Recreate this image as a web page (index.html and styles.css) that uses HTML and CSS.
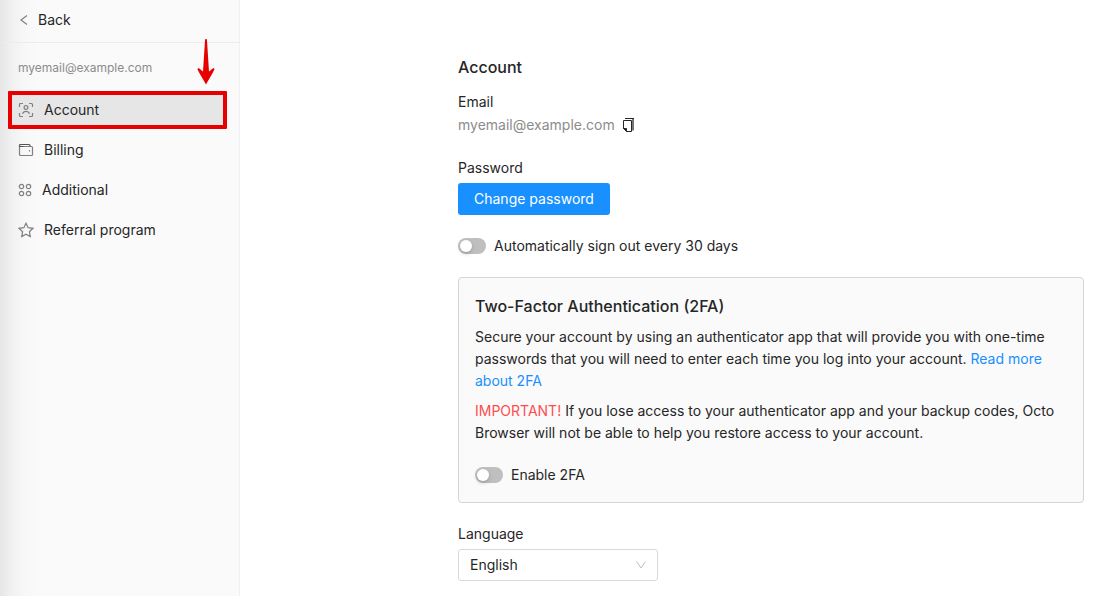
FILE: index.html
```html
<!DOCTYPE html>
<html lang="en">
<head>
<meta charset="utf-8">
<meta name="viewport" content="width=device-width, initial-scale=1">
<title>Account</title>
<link rel="stylesheet" href="styles.css">
</head>
<body>
<div class="layout">
  <aside class="sidebar">
    <a class="back" href="#">
      <svg class="back-icon" width="12" height="12" viewBox="0 0 12 12"><path d="M9 1.500 3 6 9 10.500"/></svg>
      <span>Back</span>
    </a>
    <p class="user">myemail@example.com</p>
    <nav class="menu">
      <a class="item item-active" href="#">
        <svg class="icon" width="16" height="16" viewBox="0 0 16 16"><path d="M1.500 5V2.500a1 1 0 0 1 1-1H5M11 1.500h2.500a1 1 0 0 1 1 1V5M14.500 11v2.500a1 1 0 0 1-1 1H11M5 14.500H2.500a1 1 0 0 1-1-1V11M4.500 11.800c.5-1.600 1.800-2.500 3.500-2.500s3 .9 3.500 2.500"/><circle cx="8" cy="5.500" r="1.900"/></svg>
        <span>Account</span>
      </a>
      <a class="item" href="#">
        <svg class="icon" width="16" height="16" viewBox="0 0 16 16"><path d="M1.500 4.500h12a1 1 0 0 1 1 1v7a1 1 0 0 1-1 1h-11a1 1 0 0 1-1-1z"/><path class="dark" d="M1.500 4.500v-1a1 1 0 0 1 1-1h8.500a1 1 0 0 1 1 1v1M1.500 4.500h4"/><path d="M11.500 8v1.500"/></svg>
        <span>Billing</span>
      </a>
      <a class="item" href="#">
        <svg class="icon icon-small" width="14" height="14" viewBox="0 0 14 14"><circle cx="3.500" cy="3.500" r="2.200"/><circle cx="10.500" cy="3.500" r="2.200"/><circle cx="3.500" cy="10.500" r="2.200"/><circle cx="10.500" cy="10.500" r="2.200"/></svg>
        <span>Additional</span>
      </a>
      <a class="item" href="#">
        <svg class="icon" width="16" height="16" viewBox="0 0 16 16"><path d="m8 1.200 2.100 4.500 4.900.6-3.600 3.400.9 4.900L8 12.200l-4.300 2.400.9-4.900L1 6.300l4.900-.6z"/></svg>
        <span>Referral program</span>
      </a>
    </nav>
    <svg class="arrow" width="18" height="46" viewBox="0 0 18 46"><path d="M9 0c.8 0 1 .6 1 1.500L12 32.500l4-3.200c.8-.5 1.800.2 1.400 1.200C15 36 12 39.500 9 45.500 6 39.500 3 36 .6 30.500c-.4-1 .6-1.700 1.400-1.200l4 3.200L8 1.500C8 .6 8.200 0 9 0z"/></svg>
  </aside>
  <main class="content">
    <h1 class="title">Account</h1>
    <section class="field">
      <div class="label">Email</div>
      <div class="email">
        <span>myemail@example.com</span>
        <button class="copy" type="button" aria-label="Copy email">
          <svg width="14" height="16" viewBox="0 0 14 16"><path class="copy-bar" d="M11 2v11.500"/><path class="copy-top" d="M3 1.500h9"/><path class="copy-page" d="M1.500 3.500h8v11H4.500L1.500 11.500z"/><path class="copy-fold" d="M1.500 11.500h3v3z"/></svg>
        </button>
      </div>
    </section>
    <section class="field">
      <div class="label label-gap">Password</div>
      <button class="primary" type="button">Change password</button>
    </section>
    <label class="toggle"><input class="switch" type="checkbox" role="switch"><span>Automatically sign out every 30 days</span></label>
    <section class="card">
      <h2 class="title">Two-Factor Authentication (2FA)</h2>
      <p class="text">Secure your account by using an authenticator app that will provide you with one-time passwords that you will need to enter each time you log into your account. <a class="link" href="#">Read more about 2FA</a></p>
      <p class="text"><span class="warning">IMPORTANT!</span> If you lose access to your authenticator app and your backup codes, Octo Browser will not be able to help you restore access to your account.</p>
      <label class="toggle"><input class="switch" type="checkbox" role="switch"><span>Enable 2FA</span></label>
    </section>
    <section class="language">
      <label class="label label-gap" for="language">Language</label>
      <div class="select-wrap">
        <select class="select" id="language"><option>English</option></select>
        <svg class="chevron" width="12" height="12" viewBox="0 0 12 12"><path d="M1.500 2.500 6 9l4.500-6.500"/></svg>
      </div>
    </section>
  </main>
</div>
</body>
</html>
```
FILE: styles.css
```css
* { box-sizing: border-box; }

body {
  margin: 0;
  background: #fff;
  color: #262626;
  font-family: Inter, "Liberation Sans", sans-serif;
  font-size: 14px;
  line-height: 22px;
}

h1, h2, p { margin: 0; }
a { color: inherit; text-decoration: none; }
button, select { font: inherit; }

.layout {
  display: grid;
  grid-template-columns: 240px minmax(0, 1fr);
  min-height: 100vh;
}

.sidebar {
  position: relative;
  border-right: 1px solid #f0f0f0;
  background: linear-gradient(90deg, #e6e6e6 0, #f1f1f1 12px, #f8f8f8 26px, #fafafa 40px);
}

.back {
  display: flex;
  align-items: center;
  gap: 8px;
  padding: 9px 18px 11px;
  border-bottom: 1px solid #ececec;
}

.back-icon, .icon, .chevron {
  fill: none;
  stroke: #808080;
}

.back-icon, .icon { stroke-width: 1.2; }

.user {
  padding: 14px 18px 12px;
  color: #8c8c8c;
  font-size: 12px;
}

.menu {
  display: flex;
  flex-direction: column;
  gap: 2px;
  padding: 0 12px 0 8px;
}

.item {
  display: flex;
  align-items: center;
  gap: 10px;
  height: 38px;
  padding: 0 10px;
}

.item-active {
  padding: 0 6px;
  border: 4px solid #e60000;
  border-radius: 1px;
  background: #e6e6e6;
}

.icon { flex: none; }
.dark { stroke: #555; }

.arrow {
  position: absolute;
  top: 39px;
  right: 24px;
  fill: #e60000;
}

.content {
  padding: 55px 14px 15px 218px;
}

.title {
  font-size: 16px;
  font-weight: 500;
  line-height: 24px;
}

.field { margin-top: 12px; }
.field + .field { margin-top: 21px; }
.label { display: block; }
.label-gap { margin-bottom: 4px; }

.email {
  display: flex;
  align-items: center;
  gap: 7px;
  margin-top: 1px;
  color: #8c8c8c;
}

.copy {
  display: flex;
  padding: 0;
  border: 0;
  background: none;
  cursor: pointer;
}

.copy svg { fill: none; stroke: #262626; }
.copy .copy-bar { stroke: #777; stroke-width: 2; }
.copy .copy-page { fill: #fff; }
.copy .copy-fold { fill: #262626; }

.primary {
  display: block;
  height: 32px;
  padding: 0 16px;
  border: 0;
  border-radius: 3px;
  background: #1890ff;
  color: #fff;
  cursor: pointer;
}

.toggle {
  display: flex;
  align-items: center;
  gap: 8px;
  margin-top: 20px;
}

.switch {
  display: flex;
  align-items: center;
  flex: none;
  width: 28px;
  height: 16px;
  margin: 0;
  padding: 2px;
  border-radius: 8px;
  background: #bfbfbf;
  appearance: none;
  cursor: pointer;
}

.switch::before {
  width: 12px;
  height: 12px;
  border-radius: 50%;
  background: #fff;
  box-shadow: 0 2px 4px rgba(0, 35, 11, 0.2);
  content: "";
}

.switch:checked { justify-content: flex-end; background: #1890ff; }

.card {
  margin-top: 20px;
  padding: 16px;
  border: 1px solid #d4d4d4;
  border-radius: 4px;
  background: #fafafa;
}

.text { margin-top: 8px; }
.link { color: #1890ff; }
.warning { color: #ff4d4f; }

.language { margin-top: 20px; }

.select-wrap {
  display: grid;
  align-items: center;
  width: 200px;
}

.select, .chevron { grid-area: 1 / 1; }

.select {
  width: 100%;
  height: 32px;
  padding: 0 11px;
  border: 1px solid #d9d9d9;
  border-radius: 3px;
  background: #fff;
  color: inherit;
  appearance: none;
}

.chevron {
  justify-self: end;
  margin-right: 11px;
  stroke: #bfbfbf;
  pointer-events: none;
}
```
